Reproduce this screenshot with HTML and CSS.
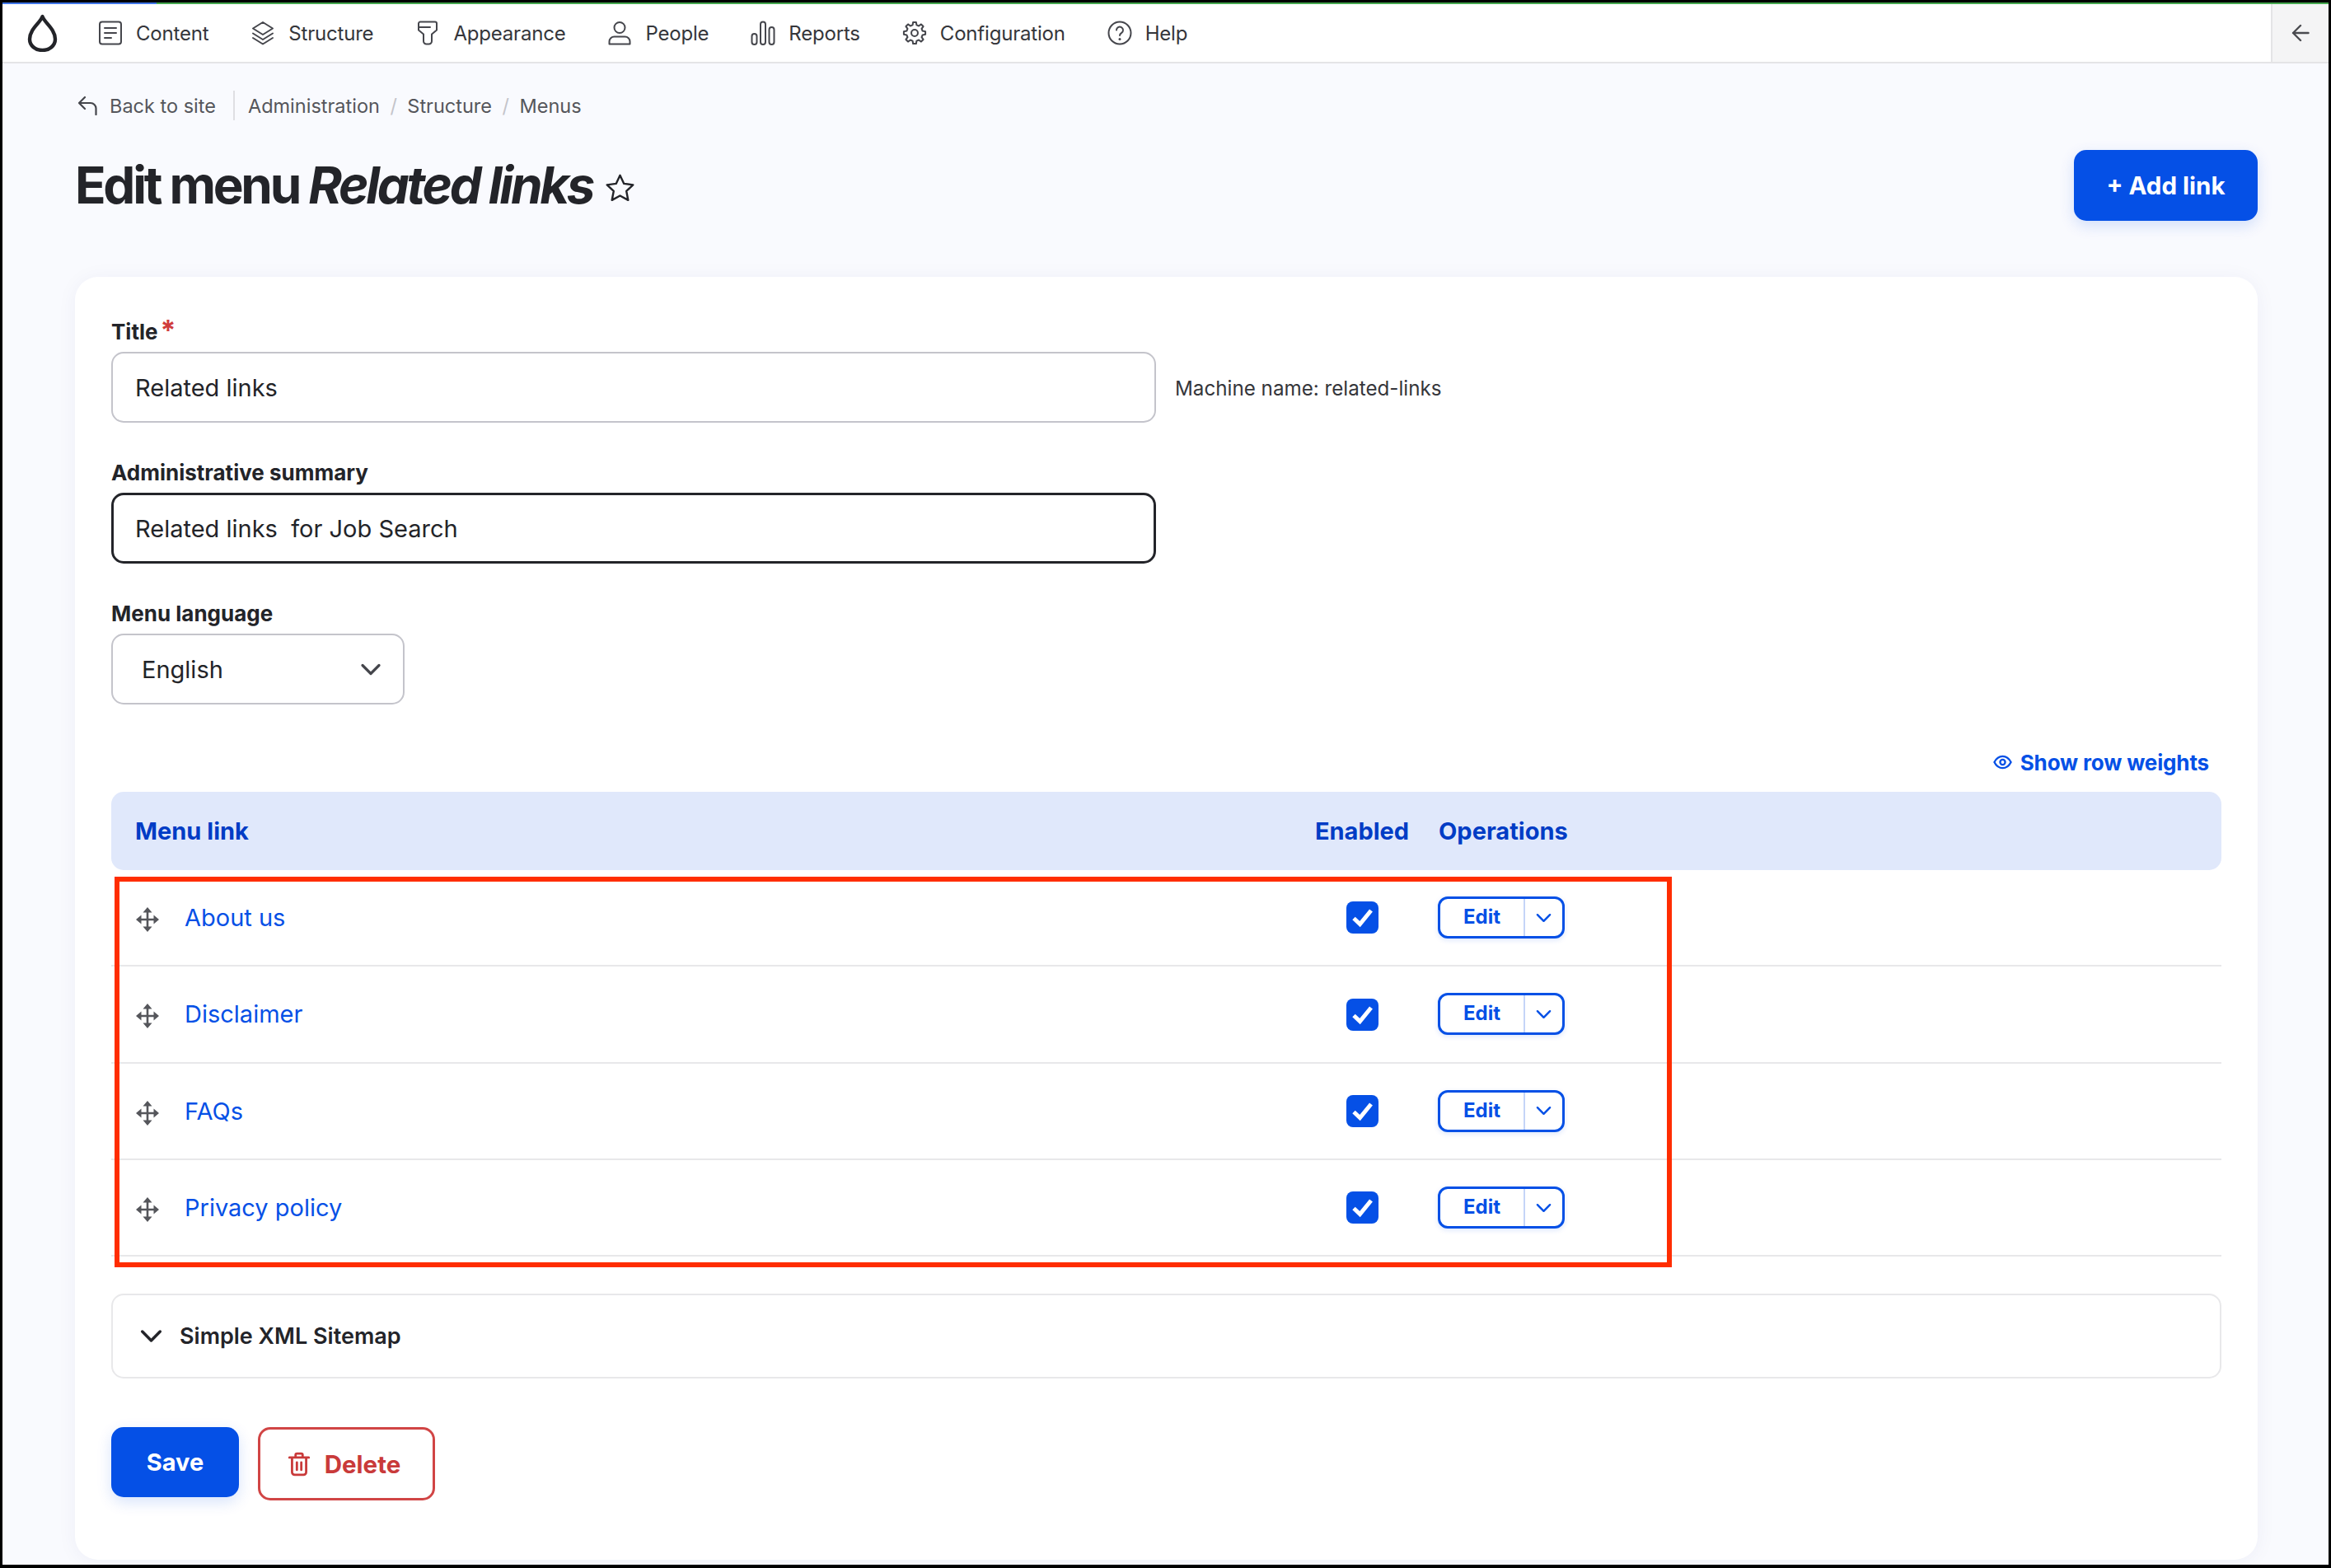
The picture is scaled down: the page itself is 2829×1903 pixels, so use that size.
FILE: index.html
```html
<!DOCTYPE html>
<html lang="en">
<head>
<meta charset="utf-8">
<title>Edit menu Related links</title>
<link rel="stylesheet" href="styles.css">
</head>
<body>
<svg class="sprites" aria-hidden="true">
  <symbol id="drag" viewBox="0 0 28 30"><path d="M14 4v22M4 15h20" fill="none" stroke="#55565b" stroke-width="2.600"/><path d="M14 0l5.500 6.500h-11zM14 30l-5.500-6.500h11zM0 15l6.500-5.500v11zM28 15l-6.500 5.500v-11z" fill="#55565b"/></symbol>
  <symbol id="check" viewBox="0 0 39 39"><path d="M9 20.500l7.500 7L30 11" fill="none" stroke="#fff" stroke-width="5"/></symbol>
  <symbol id="chev" viewBox="0 0 20 12"><path d="M2 2l8 8 8-8" fill="none" stroke="currentColor" stroke-width="2.600" stroke-linecap="round" stroke-linejoin="round"/></symbol>
</svg>
<div class="frame">
  <div class="progress"></div>
  <header class="topbar">
    <svg class="logo" viewBox="0 0 37 46"><path d="M18.500 3C16.500 10 3 18 3 30.500 3 38.500 10 44 18.500 44S34 38.500 34 30.500C34 18 20.500 10 18.500 3Z" fill="none" stroke="#232429" stroke-width="4.400" stroke-linejoin="round"/></svg>
    <nav class="nav">
      <a class="nav-item"><svg class="nav-icon" viewBox="0 0 30 30"><rect x="2" y="1.500" width="26" height="27" rx="3" /><path d="M8 9h14M8 15h14M8 21h8"/></svg>Content</a>
      <a class="nav-item"><svg class="nav-icon" viewBox="0 0 30 30"><path d="M15 2l12 7.500-12 7.500L3 9.500zM3 15.500L15 23l12-7.500M3 21l12 7.500L27 21"/></svg>Structure</a>
      <a class="nav-item"><svg class="nav-icon" viewBox="0 0 30 30"><path d="M4 3.500a2 2 0 0 1 2-2h18a2 2 0 0 1 2 2v8l-6 5v8.500a3.500 3.500 0 0 1-3.500 3.500h-3A3.500 3.500 0 0 1 10 25v-8.500l-6-5zM4 8h14"/></svg>Appearance</a>
      <a class="nav-item"><svg class="nav-icon" viewBox="0 0 30 30"><circle cx="15" cy="8.500" r="6.500"/><path d="M2.500 28.500v-3a6 6 0 0 1 6-6h13a6 6 0 0 1 6 6v3z"/></svg>People</a>
      <a class="nav-item"><svg class="nav-icon" viewBox="0 0 30 30"><rect x="1.500" y="16" width="6" height="13" rx="3"/><rect x="12" y="1.500" width="6" height="27.500" rx="3"/><rect x="22.500" y="8" width="6" height="21" rx="3"/></svg>Reports</a>
      <a class="nav-item"><svg class="nav-icon" viewBox="-0.500 -0.500 25 25"><path stroke-width="1.700" d="M9.990 3.950L10.470 1.110H13.530L14.010 3.950L16.270 4.890L18.620 3.210L20.790 5.380L19.110 7.730L20.050 9.990L22.890 10.470V13.530L20.050 14.010L19.110 16.270L20.790 18.620L18.620 20.790L16.270 19.110L14.010 20.050L13.530 22.890H10.470L9.990 20.050L7.730 19.110L5.380 20.790L3.210 18.620L4.890 16.270L3.950 14.010L1.110 13.530V10.470L3.950 9.990L4.890 7.730L3.210 5.380L5.380 3.210L7.730 4.890Z"/><circle stroke-width="1.700" cx="12" cy="12" r="3.300"/></svg>Configuration</a>
      <a class="nav-item"><svg class="nav-icon" viewBox="0 0 30 30"><circle cx="15" cy="15" r="13.500"/><path d="M11 11.500a4 4 0 1 1 6.200 3.400c-1.400.9-2.200 1.600-2.200 3.100"/><circle class="solid" cx="15" cy="22.500" r="1.500"/></svg>Help</a>
    </nav>
    <div class="collapse"><svg class="collapse-icon" viewBox="0 0 22 22"><path d="M20.500 11H2M11 2l-9 9 9 9"/></svg></div>
  </header>
  <main class="main">
    <div class="crumbs">
      <a class="back"><svg class="back-icon" viewBox="0 0 24 24"><path d="M9 2L2 9l7 7M2 9h14a6.500 6.500 0 0 1 6.500 6.500V23"/></svg>Back to site</a>
      <ol class="trail">
        <li>Administration</li>
        <li class="sep">/</li>
        <li>Structure</li>
        <li class="sep">/</li>
        <li>Menus</li>
      </ol>
    </div>
    <div class="heading">
      <h1 class="title">Edit menu <em>Related links</em></h1>
      <svg class="star" viewBox="0 0 34 32"><path d="M17 2.500l4.400 9.300 10.100 1.300-7.400 7 1.900 10L17 25.200l-9 4.900 1.900-10-7.400-7 10.100-1.300z"/></svg>
      <a class="btn btn-primary btn-add">+ Add link</a>
    </div>
    <form class="card">
      <label class="label" for="f-title">Title<span class="req">*</span></label>
      <div class="field-row">
        <input id="f-title" class="input" value="Related links">
        <span class="machine">Machine name: related-links</span>
      </div>
      <label class="label label-next" for="f-sum">Administrative summary</label>
      <input id="f-sum" class="input input-focus" value="Related links  for Job Search">
      <label class="label label-next" for="f-lang">Menu language</label>
      <div class="select">English<svg class="select-chev"><use href="#chev"/></svg></div>
      <div class="weights"><a class="weights-link"><svg class="eye" viewBox="0 0 24 18"><path d="M1.500 9C4 4 7.500 1.500 12 1.500S20 4 22.500 9C20 14 16.500 16.500 12 16.500S4 14 1.500 9Z"/><circle cx="12" cy="9" r="3.200"/></svg>Show row weights</a></div>
      <div class="table-wrap">
        <table class="table">
          <colgroup><col class="col-link"><col class="col-en"><col></colgroup>
          <thead>
            <tr><th>Menu link</th><th class="th-en">Enabled</th><th class="th-ops">Operations</th></tr>
          </thead>
          <tbody>
            <tr><td class="td-link"><svg class="drag"><use href="#drag"/></svg><a>About us</a></td><td class="td-en"><span class="checkbox"><svg><use href="#check"/></svg></span></td><td class="td-ops"><span class="drop"><span class="drop-main">Edit</span><span class="drop-toggle"><svg class="drop-chev"><use href="#chev"/></svg></span></span></td></tr>
            <tr><td class="td-link"><svg class="drag"><use href="#drag"/></svg><a>Disclaimer</a></td><td class="td-en"><span class="checkbox"><svg><use href="#check"/></svg></span></td><td class="td-ops"><span class="drop"><span class="drop-main">Edit</span><span class="drop-toggle"><svg class="drop-chev"><use href="#chev"/></svg></span></span></td></tr>
            <tr><td class="td-link"><svg class="drag"><use href="#drag"/></svg><a>FAQs</a></td><td class="td-en"><span class="checkbox"><svg><use href="#check"/></svg></span></td><td class="td-ops"><span class="drop"><span class="drop-main">Edit</span><span class="drop-toggle"><svg class="drop-chev"><use href="#chev"/></svg></span></span></td></tr>
            <tr><td class="td-link"><svg class="drag"><use href="#drag"/></svg><a>Privacy policy</a></td><td class="td-en"><span class="checkbox"><svg><use href="#check"/></svg></span></td><td class="td-ops"><span class="drop"><span class="drop-main">Edit</span><span class="drop-toggle"><svg class="drop-chev"><use href="#chev"/></svg></span></span></td></tr>
          </tbody>
        </table>
        <div class="callout"></div>
      </div>
      <div class="details"><svg class="details-chev"><use href="#chev"/></svg>Simple XML Sitemap</div>
      <div class="actions">
        <a class="btn btn-primary btn-save">Save</a>
        <a class="btn btn-danger"><svg class="trash" viewBox="0 0 24 28"><path d="M1 6.500h22M8 6V3.500A1.500 1.500 0 0 1 9.500 2h5A1.500 1.500 0 0 1 16 3.500V6M4 6.500V23a3 3 0 0 0 3 3h10a3 3 0 0 0 3-3V6.500M9.500 12v8.500M14.500 12v8.500"/></svg>Delete</a>
      </div>
    </form>
  </main>
</div>
</body>
</html>
```
FILE: styles.css
```css
* { box-sizing: border-box; }
html, body { margin: 0; padding: 0; }
body { font-family: Inter, "Liberation Sans", sans-serif; color: #232429; background: #000; }
.sprites { display: none; }

.frame { width: 2829px; height: 1903px; padding: 3px 3px 4px 3px; background: #000; overflow: hidden; display: flex; flex-direction: column; }
.progress { height: 2px; flex: none; background: linear-gradient(to right, #3f76e8 0 187px, #45a84f 187px); }

.topbar { flex: none; height: 72px; display: flex; align-items: center; background: #fff; border-bottom: 2px solid #e4e4e6; padding-left: 30px; }
.logo { width: 37px; height: 46px; flex: none; }
.nav { display: flex; align-items: center; gap: 51px; margin-left: 49px; }
.nav-item { display: flex; align-items: center; gap: 16px; font-size: 24px; letter-spacing: -.2px; font-weight: 400; color: #35363b; }
.nav-icon { width: 30px; height: 30px; flex: none; fill: none; stroke: #45464c; stroke-width: 2; stroke-linejoin: round; stroke-linecap: round; }
.nav-icon .solid { fill: #45464c; stroke: none; }
.collapse { margin-left: auto; width: 70px; height: 70px; background: #f4f4f5; border-left: 2px solid #e4e4e6; display: flex; align-items: center; justify-content: center; }
.collapse-icon { width: 22px; height: 22px; fill: none; stroke: #4a4b50; stroke-width: 2.400; stroke-linecap: round; stroke-linejoin: round; }

.main { flex: 1; background: #f9fafe; padding: 33px 86px 0 88px; min-height: 0; }
.crumbs { height: 36px; display: flex; align-items: center; font-size: 23.500px; color: #55565b; }
.back { display: flex; align-items: center; gap: 15px; padding-left: 3px; padding-right: 21px; height: 36px; border-right: 2px solid #dfdfe3; }
.back-icon { width: 24px; height: 24px; fill: none; stroke: #45464c; stroke-width: 2.200; stroke-linecap: round; stroke-linejoin: round; }
.trail { list-style: none; margin: 0 0 0 16px; padding: 0; display: flex; gap: 12.500px; }
.sep { color: #c4c4ca; }

.heading { margin-top: 36px; height: 86px; display: flex; align-items: center; }
.title { margin: 0; font-size: 62px; font-weight: 700; letter-spacing: -3.300px; line-height: 86px; color: #232429; }
.title em { font-style: italic; }
.star { width: 37px; height: 35px; margin: 5px 0 0 15px; fill: none; stroke: #232429; stroke-width: 2.200; stroke-linejoin: round; }
.btn-add { margin-left: auto; width: 223px; height: 86px; font-size: 29.500px; }

.btn { display: flex; align-items: center; justify-content: center; border-radius: 15px; font-weight: 700; }
.btn-primary { background: #0550e6; color: #fff; box-shadow: 0 6px 18px rgba(5, 80, 230, .16); }

.card { margin-top: 68px; background: #fff; border-radius: 28px; padding: 52px 44px 72px; box-shadow: 0 2px 24px rgba(20, 40, 110, .05); }
.label { display: block; font-size: 26px; font-weight: 700; line-height: 30px; margin-bottom: 9px; color: #232429; }
.label-next { margin-top: 46px; }
.req { color: #d03c3c; font-size: 34px; vertical-align: -1px; margin-left: 3px; line-height: 0; }
.field-row { display: flex; align-items: center; gap: 23px; }
.input { display: block; width: 1268px; height: 86px; padding: 0 27px; border: 2px solid #c4c4cb; border-radius: 15px; background: #fff; font: 400 29px Inter, sans-serif; color: #232429; outline: none; }
.input-focus { border: 3px solid #232429; padding: 0 26px; }
.machine { font-size: 24.200px; color: #35363b; margin-top: 2px; }
.select { position: relative; width: 356px; height: 86px; padding-left: 35px; display: flex; align-items: center; border: 2px solid #c4c4cb; border-radius: 15px; font-size: 29px; background: #fff; }
.select-chev { position: absolute; left: 300px; top: 34px; width: 26px; height: 15px; color: #45464c; }

.weights { margin-top: 55px; height: 30px; padding-right: 15px; display: flex; justify-content: flex-end; }
.weights-link { display: flex; align-items: center; gap: 10px; font-size: 26px; font-weight: 700; color: #0550e6; letter-spacing: -.15px; }
.eye { width: 23px; height: 18px; fill: none; stroke: #0550e6; stroke-width: 2.400; }

.table-wrap { position: relative; margin-top: 21px; }
.table { width: 100%; table-layout: fixed; border-collapse: separate; border-spacing: 0; }
.col-link { width: 1445px; }
.col-en { width: 146px; }
.table th { height: 95px; padding: 0; background: #e0e8fb; color: #003cc5; font-size: 29px; font-weight: 700; text-align: left; }
.table th:first-child { padding-left: 29px; border-radius: 15px 0 0 15px; }
.table th:last-child { border-radius: 0 15px 15px 0; padding-left: 20px; }
.table .th-en { text-align: center; }
.table td { height: 117.300px; padding: 0; border-bottom: 2px solid #e8e8ea; font-size: 29px; }
.td-link { padding-left: 30px !important; }
.td-link a { color: #0550e6; }
.drag { width: 28px; height: 30px; margin-right: 31px; vertical-align: -7px; }
.td-en { text-align: center; }
.checkbox { display: inline-flex; width: 39px; height: 39px; border-radius: 8px; background: #0550e6; vertical-align: middle; }
.checkbox svg { width: 39px; height: 39px; }
.td-ops { padding-left: 19px !important; }
.drop { display: inline-flex; width: 154px; height: 51px; border: 3px solid #0550e6; border-radius: 12px; vertical-align: middle; background: #fff; box-shadow: 0 2px 6px rgba(5, 80, 230, .14); color: #0550e6; }
.drop-main { width: 103px; display: flex; align-items: center; justify-content: center; font-size: 24px; font-weight: 700; border-right: 2px solid #c5d5f8; padding-bottom: 2px; }
.drop-toggle { flex: 1; display: flex; align-items: center; justify-content: center; }
.drop-chev { width: 19px; height: 12px; }

.callout { position: absolute; left: 4px; top: 103px; width: 1890px; height: 474px; border: 6px solid #ff2d00; pointer-events: none; }

.details { margin-top: 45px; height: 103px; display: flex; align-items: center; padding-left: 33px; border: 2px solid #e8e8ea; border-radius: 15px; font-size: 27px; font-weight: 600; color: #232429; }
.details-chev { width: 27px; height: 17px; margin-right: 21px; color: #232429; }

.actions { margin-top: 59px; display: flex; align-items: flex-start; gap: 23px; }
.btn-save { width: 155px; height: 85px; font-size: 29px; }
.btn-danger { width: 215px; height: 89px; gap: 18px; padding-right: 5px; border: 3px solid #d14545; background: #fff; color: #c93a3a; font-size: 29.500px; }
.trash { width: 26px; height: 30px; fill: none; stroke: #c93a3a; stroke-width: 2.600; stroke-linecap: round; stroke-linejoin: round; }
```
